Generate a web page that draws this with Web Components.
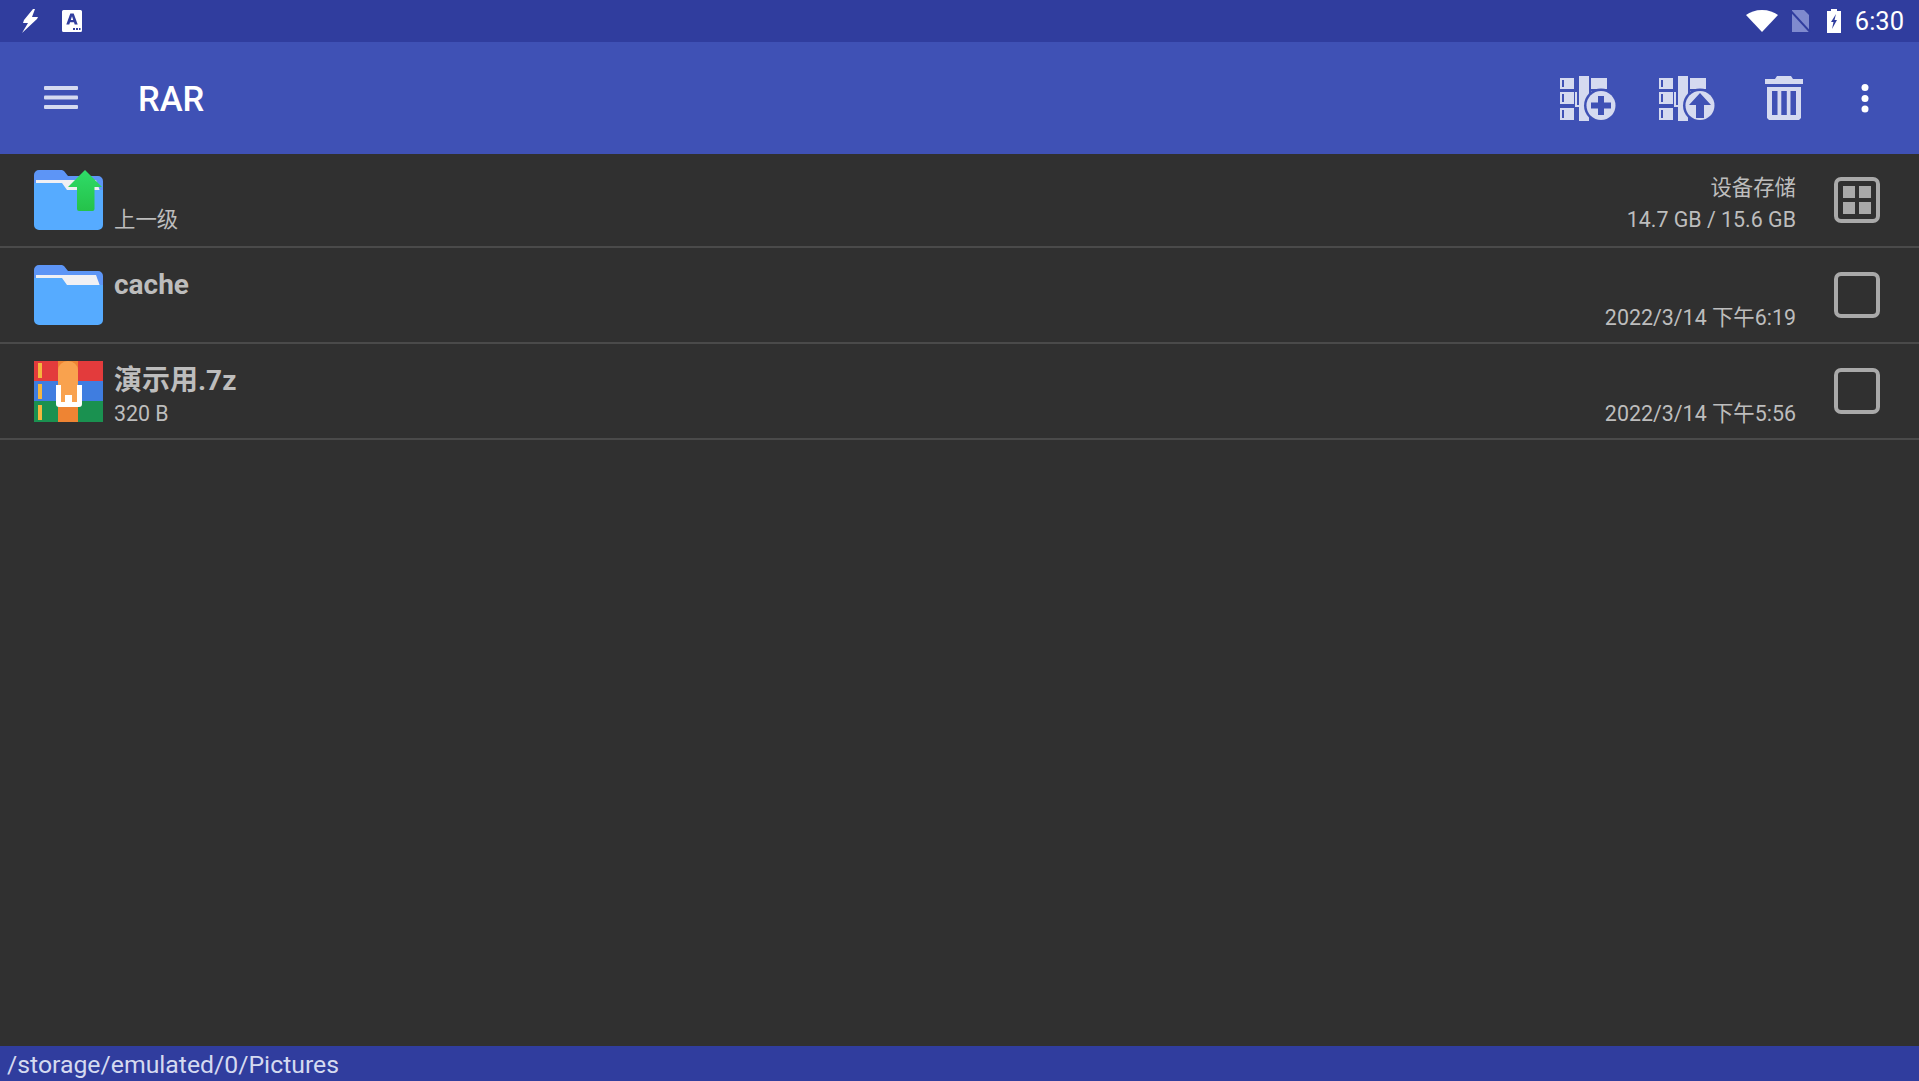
<!DOCTYPE html>
<html lang="zh">
<head>
<meta charset="utf-8">
<title>RAR</title>
<style>
   html, body { margin: 0; height: 100%; }
   body {
      display: flex;
      flex-direction: column;
      overflow: hidden;
      background: #303030;
      font-family: Roboto, "Noto Sans CJK SC", sans-serif;
   }
   file-list { flex: 1; }
</style>
</head>
<body>
<status-bar></status-bar>
<app-bar title="RAR"></app-bar>
<file-list>
   <file-row kind="up" class="first" sub="上一级" meta="设备存储" info="14.7 GB / 15.6 GB" check="grid"></file-row>
   <file-row kind="folder" name="cache" info="2022/3/14 下午6:19"></file-row>
   <file-row kind="archive" name="演示用.7z" sub="320 B" info="2022/3/14 下午5:56"></file-row>
</file-list>
<path-bar>/storage/emulated/0/Pictures</path-bar>

<script>
// all the drawn icons live here, the key is the name used by the elements
const ARCHIVE_BASE = `
   <path fill-rule="evenodd" d="M0 2h14v11H0zM2 4v7h2V4zM0 16h14v12H0zM2 18v8h2v-8zM0 32h14v12H0zM2 34v8h2v-8z"/>
   <path d="M19 0h10v45H19z"/>
   <path d="M31 2h16v11H31zM31 15h5v9h-5z"/>
   <path d="M15 16h2v13h4v2h-6z"/>`;

const FOLDER = `
   <path fill="#5d95f6" d="M5 0h23l2 1 4 5h30a5 5 0 0 1 5 5v10H0V5a5 5 0 0 1 5-5z"/>
   <path fill="#f0f0f4" d="M2 10h60l4 11H2z"/>
   <path fill="#56abff" d="M0 13h28l5 7h36v35a5 5 0 0 1-5 5H5a5 5 0 0 1-5-5z"/>`;

const ICONS = {
   bolt: `<svg width="16" height="24" viewBox="0 0 16 24"><path fill="#fff" d="M11 0 2 11l-1 3h5L0 24l15-14 1-2h-6l3-8z"/></svg>`,
   card: `<svg width="20" height="22" viewBox="0 0 20 22"><path fill="#fff" d="M1.5 0h17A1.5 1.5 0 0 1 20 1.500v19a1.500 1.500 0 0 1-1.500 1.500h-17A1.500 1.500 0 0 1 0 20.500v-19A1.500 1.500 0 0 1 1.500 0z"/><path fill="#303d9e" d="M8.300 3.500h3.400l4 11h-3l-.7-2.200H8l-.7 2.200h-3zM8.800 10h2.400L10 6.300zM11 18h2v2h-2zM14 18h2v2h-2zM17 18h1.500v2H17z"/></svg>`,
   wifi: `<svg width="32" height="22" viewBox="0 0 32 22"><path fill="#fff" d="M16 22 0 5C4 2 9.500 0 16 0s12 2 16 5z"/></svg>`,
   sim: `<svg width="22" height="24" viewBox="0 0 22 24"><path fill="#7f8ace" d="M3 1h12l5 5v17H3z"/><path stroke="#303d9e" stroke-width="2" d="m0 0 22 24"/></svg>`,
   battery: `<svg width="14" height="24" viewBox="0 0 14 24"><path fill="#fff" d="M4 0h6v2h4v22H0V2h4z"/><path fill="#303d9e" d="M9 5 4 13h2.500L5 20l5-9H7.500z"/></svg>`,
   menu: `<svg width="34" height="24" viewBox="0 0 34 24"><g fill="#d5daf0"><rect y="0" width="34" height="4" rx="1"/><rect y="9.500" width="34" height="4" rx="1"/><rect y="19" width="34" height="4" rx="1"/></g></svg>`,
   archivePlus: `<svg width="56" height="45" viewBox="0 0 56 45"><g fill="#d5daf0">${ARCHIVE_BASE}</g><circle cx="41" cy="29.500" r="17" fill="#3f51b5"/><circle cx="41" cy="29.500" r="14.500" fill="#d5daf0"/><path fill="#3f51b5" d="M38 20h6v6.500h7v6h-7V39h-6v-6.500h-7v-6h7z"/></svg>`,
   archiveUp: `<svg width="56" height="45" viewBox="0 0 56 45"><g fill="#d5daf0">${ARCHIVE_BASE}</g><circle cx="41" cy="29.500" r="17" fill="#3f51b5"/><circle cx="41" cy="29.500" r="14.500" fill="#d5daf0"/><path fill="#3f51b5" d="m41 17 11 12h-7v13h-8V29h-7z"/></svg>`,
   trash: `<svg width="38" height="44" viewBox="0 0 38 44"><path fill="#d5daf0" fill-rule="evenodd" d="M12 0h14l2 3h10v5H0V3h10zM2 11h34v31l-2 2H4l-2-2zM7 15v24h5.500V15zM16.300 15v24h5.500V15zM25.500 15v24H31V15z"/></svg>`,
   dots: `<svg width="8" height="29" viewBox="0 0 8 29"><g fill="#fff"><circle cx="4" cy="3.500" r="3.500"/><circle cx="4" cy="14.500" r="3.500"/><circle cx="4" cy="25" r="3.500"/></g></svg>`,
   folder: `<svg width="69" height="60" viewBox="0 0 69 60">${FOLDER}</svg>`,
   up: `<svg width="69" height="60" viewBox="0 0 69 60">${FOLDER}
      <defs><linearGradient id="g" x1="0" y1="0" x2="0" y2="1"><stop offset="0" stop-color="#2fdc68"/><stop offset="1" stop-color="#25c24a"/></linearGradient></defs>
      <path fill="url(#g)" d="M51 0 68 17H60.500V39a2 2 0 0 1-2 2H45a2 2 0 0 1-2-2V17H34z"/></svg>`,
   archive: `<svg width="69" height="61" viewBox="0 0 69 61">
      <path fill="#e33b3c" d="M0 0h69v20H0z"/>
      <path fill="#3f7de0" d="M0 20h69v20H0z"/>
      <path fill="#1a9150" d="M0 40h69v21H0z"/>
      <path fill="#f4b63f" d="M4 2h4v15H4zM4 23h4v15H4zM4 44h4v15H4z"/>
      <path fill="#ee8433" d="M24 0h20v61H24z"/>
      <path fill="#f9a24e" d="M24 22V9a10 9 0 0 1 20 0v13zM24 22h20v20H24z"/>
      <path fill="#fff" d="M22 24h5v17h4v-7h7v7h5V24h5v19a3 3 0 0 1-3 3H25a3 3 0 0 1-3-3z"/>
      </svg>`,
   grid: `<svg width="46" height="46" viewBox="0 0 46 46"><rect x="2" y="2" width="42" height="42" rx="5" fill="none" stroke="#a9a9a9" stroke-width="4"/><path fill="#a9a9a9" d="M9 9h12v12H9zM25 9h12v12H25zM9 25h12v12H9zM25 25h12v12H25z"/></svg>`,
   box: `<svg width="46" height="46" viewBox="0 0 46 46"><rect x="2" y="2" width="42" height="42" rx="5" fill="none" stroke="#a9a9a9" stroke-width="4"/></svg>`,
};


class StatusBar extends HTMLElement {
   constructor() {
      super();
      this.attachShadow({ mode: "open" }).innerHTML = `
      <style>
         :host {
            display: flex;
            align-items: center;
            height: 42px;
            padding: 0 15px 0 22px;
            box-sizing: border-box;
            background: #303d9e;
            color: #fff;
            flex: none;
         }
         .left { display: flex; align-items: center; gap: 24px; flex: 1; }
         .right { display: flex; align-items: center; }
         svg { display: block; }
         .wifi { margin-right: 11px; }
         .sim { margin-right: 16px; }
         .battery { margin-right: 14px; }
         .time { font: 400 25.500px Roboto, sans-serif; }
      </style>
      <div class="left">${ICONS.bolt}${ICONS.card}</div>
      <div class="right">
         <span class="wifi">${ICONS.wifi}</span>
         <span class="sim">${ICONS.sim}</span>
         <span class="battery">${ICONS.battery}</span>
         <span class="time">6:30</span>
      </div>`;
   }
}
customElements.define("status-bar", StatusBar);


class AppBar extends HTMLElement {
   constructor() {
      super();
      this.attachShadow({ mode: "open" }).innerHTML = `
      <style>
         :host {
            display: flex;
            align-items: center;
            height: 112px;
            padding: 0 50px 0 44px;
            box-sizing: border-box;
            background: #3f51b5;
            flex: none;
         }
         .title {
            flex: 1;
            margin-left: 60px;
            padding-top: 2px;
            color: #fff;
            font: 500 34.500px Roboto, sans-serif;
         }
         .actions { display: flex; align-items: center; }
         svg { display: block; }
         .plus { margin-right: 43px; }
         .up { margin-right: 50px; }
         .trash { margin-right: 58px; }
      </style>
      <span class="menu">${ICONS.menu}</span>
      <span class="title">${this.getAttribute("title")}</span>
      <div class="actions">
         <span class="plus">${ICONS.archivePlus}</span>
         <span class="up">${ICONS.archiveUp}</span>
         <span class="trash">${ICONS.trash}</span>
         <span>${ICONS.dots}</span>
      </div>`;
   }
}
customElements.define("app-bar", AppBar);


class FileList extends HTMLElement {
   constructor() {
      super();
      this.attachShadow({ mode: "open" }).innerHTML = `
      <style>
         :host { display: block; background: #303030; min-height: 0; }
      </style>
      <slot></slot>`;
   }
}
customElements.define("file-list", FileList);


class FileRow extends HTMLElement {
   constructor() {
      super();
      const name = this.getAttribute("name") || "";
      const sub = this.getAttribute("sub") || "";
      const meta = this.getAttribute("meta") || "";
      const info = this.getAttribute("info") || "";
      const kind = this.getAttribute("kind");
      const check = this.getAttribute("check") || "box";
      this.attachShadow({ mode: "open" }).innerHTML = `
      <style>
         :host {
            display: flex;
            align-items: center;
            height: 96px;
            padding: 0 39px 0 34px;
            box-sizing: border-box;
            border-bottom: 2px solid #4a4a4a;
            color: #bdbdbd;
            font-family: Roboto, "Noto Sans CJK SC", sans-serif;
         }
         :host(.first) { height: 94px; }
         svg { display: block; }
         .icon { width: 69px; flex: none; }
         .text, .side {
            display: flex;
            flex-direction: column;
            justify-content: flex-end;
            height: 100%;
            box-sizing: border-box;
         }
         .text { flex: 1; margin-left: 11px; }
         .name { height: 34px; line-height: 34px; font-size: 28px; font-weight: 700; margin-bottom: auto; margin-top: 20px; }
         .line { height: 32px; line-height: 32px; font-size: 21.400px; margin-bottom: 8px; white-space: nowrap; }
         :host(.first) .line { margin-bottom: 10px; }
         .side { text-align: right; align-items: flex-end; margin-right: 38px; }
         .meta { height: 32px; line-height: 32px; font-size: 21.400px; }
      </style>
      <span class="icon">${ICONS[kind]}</span>
      <div class="text">
         ${name ? `<div class="name">${name}</div>` : ""}
         ${sub ? `<div class="line">${sub}</div>` : ""}
      </div>
      <div class="side">
         ${meta ? `<div class="meta">${meta}</div>` : ""}
         <div class="line">${info}</div>
      </div>
      <span class="check">${ICONS[check]}</span>`;
   }
}
customElements.define("file-row", FileRow);


class PathBar extends HTMLElement {
   constructor() {
      super();
      this.attachShadow({ mode: "open" }).innerHTML = `
      <style>
         :host {
            display: flex;
            align-items: center;
            height: 35px;
            padding: 2px 0 0 7px;
            box-sizing: border-box;
            background: #303d9e;
            color: #d5daf0;
            font: 400 24.800px Roboto, sans-serif;
            flex: none;
         }
      </style>
      <slot></slot>`;
   }
}
customElements.define("path-bar", PathBar);
</script>
</body>
</html>
